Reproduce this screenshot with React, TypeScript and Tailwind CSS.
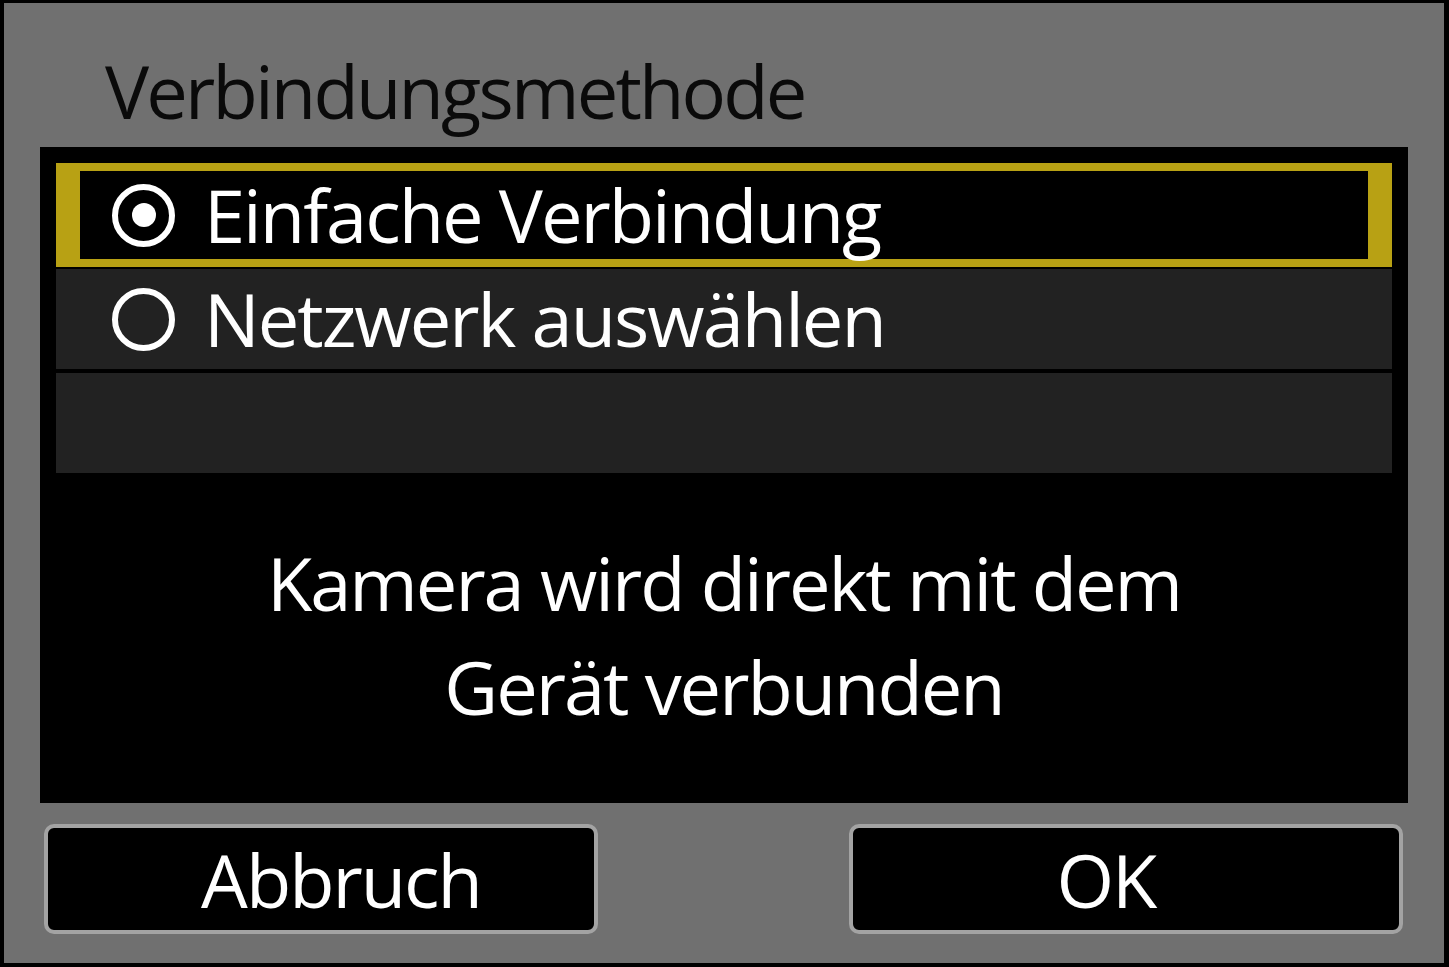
const font = { fontFamily: '"Open Sans", "Noto Sans", sans-serif' };

function Radio({ checked }: { checked: boolean }) {
  return (
    <div className="flex h-[63px] w-[63px] shrink-0 items-center justify-center rounded-full border-[6px] border-white">
      {checked && <div className="h-[24px] w-[24px] rounded-full bg-white" />}
    </div>
  );
}

export default function App() {
  return (
    <div
      className="h-[967px] w-[1449px] bg-black pb-[4px] pl-[4px] pr-[5px] pt-[3px] antialiased"
      style={font}
    >
      <div className="flex h-full w-full flex-col bg-[#707070]">
        <div className="flex h-[144px] items-start pl-[101px] pt-[38px]">
          <h1 className="text-[74px] leading-[100px] tracking-[-2.8px] text-[#0a0a0a]">Verbindungsmethode</h1>
        </div>

        <div className="mx-[36px] flex h-[656px] flex-col bg-black px-[16px] pt-[16px]">
          <div className="flex h-[104px] items-center border-x-[24px] border-y-[8px] border-[#b8a114] pl-[32px]">
            <Radio checked />
            <span className="ml-[29px] text-[74px] leading-none tracking-[-2px] text-white">Einfache Verbindung</span>
          </div>
          <div className="mt-[2px] flex h-[100px] items-center bg-[#222222] pl-[56px]">
            <Radio checked={false} />
            <span className="ml-[29px] text-[74px] leading-none tracking-[-2px] text-white">Netzwerk auswählen</span>
          </div>
          <div className="mt-[4px] h-[100px] bg-[#222222]" />
          <div className="flex flex-1 flex-col items-center justify-center pb-[6px] text-center text-[74px] leading-[104px] tracking-[-2px] text-white">
            <p>Kamera wird direkt mit dem</p>
            <p>Gerät verbunden</p>
          </div>
        </div>

        <div className="flex justify-between pl-[40px] pr-[41px] pt-[21px]">
          <button className="flex h-[110px] w-[554px] items-center justify-center rounded-[10px] border-[4px] border-[#a3a3a3] bg-black pl-[40px] text-[74px] tracking-[-2px] text-white">
            Abbruch
          </button>
          <button className="flex h-[110px] w-[554px] items-center justify-center rounded-[10px] border-[4px] border-[#a3a3a3] bg-black pr-[40px] text-[74px] tracking-[-2px] text-white">
            OK
          </button>
        </div>
      </div>
    </div>
  );
}
